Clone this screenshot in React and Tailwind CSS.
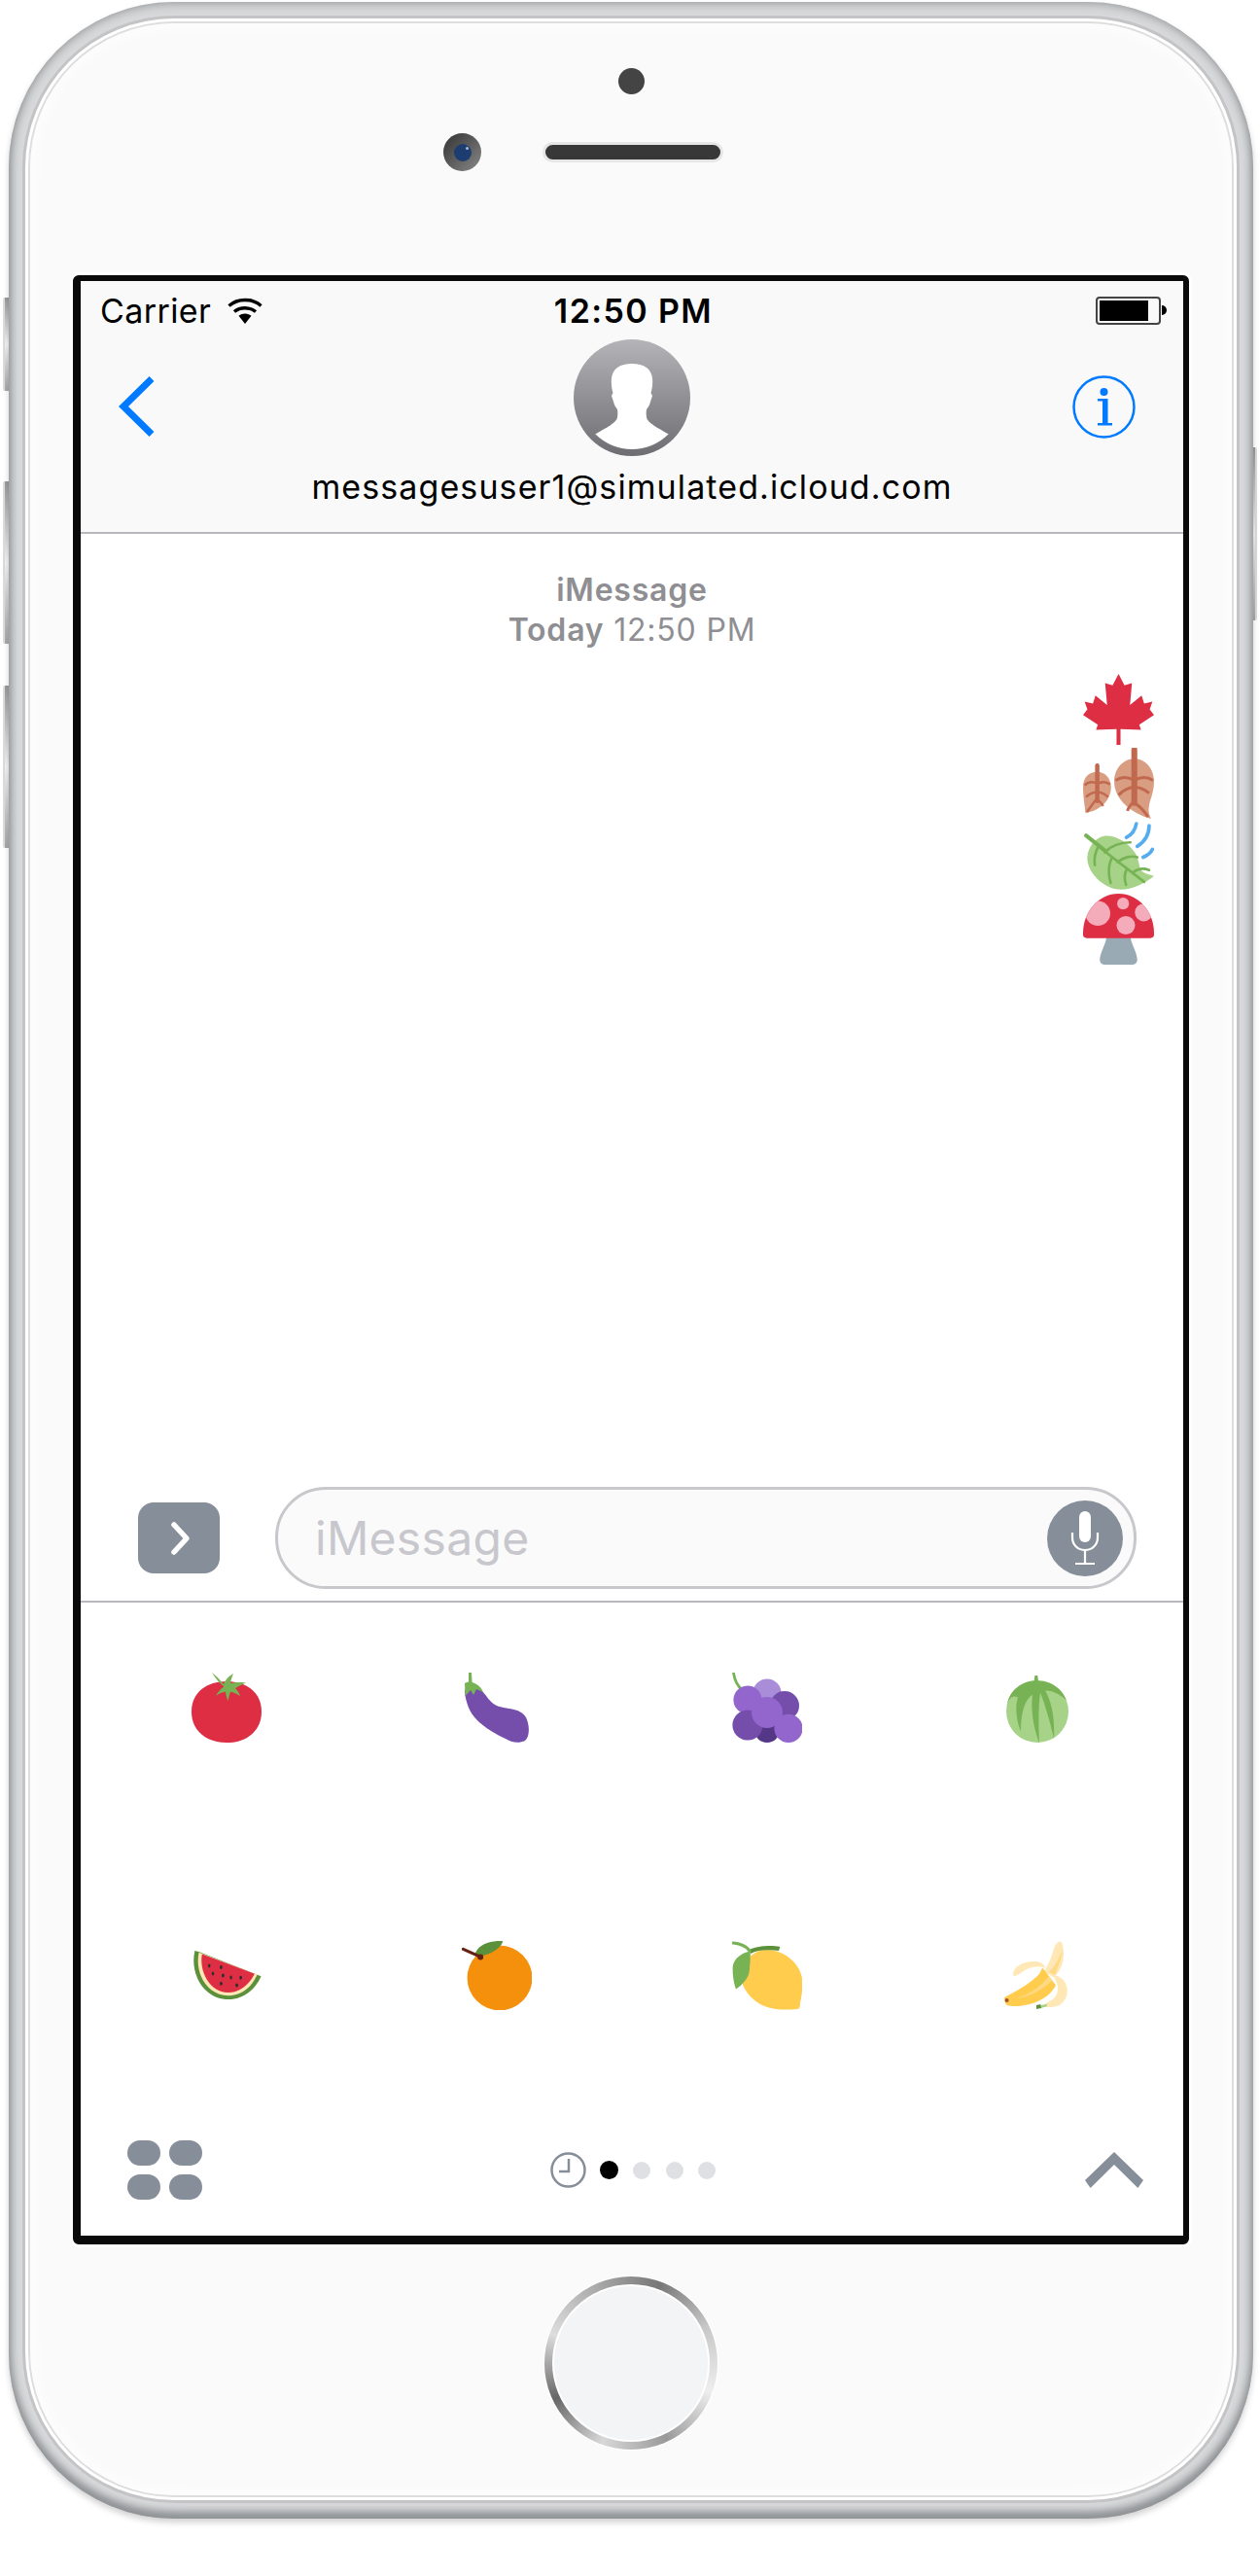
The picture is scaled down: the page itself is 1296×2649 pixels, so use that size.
import React from 'react';

const FONT = 'font-["Inter","Liberation_Sans",sans-serif]';

function Maple() {
  return (
    <svg viewBox="0 0 36 36" className="w-[73px] h-[73px]">
      <path fill="#DD2E44" d="M18 0l3 5.800 3.800-1.100-1 11.100 5.900-4.800 1.300 4 4.200-1-1.400 4 2.200 2.800-7.500 5 .9 2.500-10.400-.3V36h-2v-8l-10.400.3.900-2.500-7.500-5 2.200-2.800-1.400-4 4.200 1 1.300-4 5.900 4.800-1-11.100L15 5.800z" />
    </svg>
  );
}

function FallenLeaves() {
  return (
    <svg viewBox="0 0 36 36" className="w-[73px] h-[73px]">
      <path fill="#D99E82" d="M26 5.500C20 5.500 15.800 11 15.800 17c0 9 8.200 16 18.700 19-1.500-3-1.500-5-.5-9 1-3 2-6 2-10 0-6-4-11.500-10-11.500z" />
      <path fill="none" stroke="#C1694F" strokeWidth="1.500" d="M16.500 16.500c3-2 6-2 9.500 0c3.500-2 6.500-2 9.500 0M18 24c3-3 5-4 8-4c3 0 5 1 7.500 3M26 28c2 1 5 4 7 7M26 27c-1 1-3 3-3.500 5" />
      <path fill="none" stroke="#C1694F" strokeWidth="3" strokeLinecap="round" d="M26 1v27" />
      <path fill="#D99E82" d="M7.200 12.200C3 12.200 0 15 0 20c0 5 1 10 1.200 13 7-1 13-6 13-13 0-4.500-3-7.800-7-7.800z" />
      <path fill="none" stroke="#C1694F" strokeWidth="1.200" d="M.8 19c2-2 4-2 6.400-.8c2.500-1.200 4.500-1.200 6.500.4M1.500 25c2-2 4-2.500 5.700-2.500c2 0 4 1 5.500 2.500M7 26c-2 2-3 4-5 6.500M7.200 26c1 1 2 2 3 3.500" />
      <path fill="none" stroke="#C1694F" strokeWidth="2.200" strokeLinecap="round" d="M7.200 9v18" />
    </svg>
  );
}

function WindLeaf() {
  return (
    <svg viewBox="0 0 36 35" className="w-[73px] h-[71px]">
      <path fill="#A6D388" d="M12.500 7.200C7 7 3 12 2.200 17.500 1.500 24 8 32 16 34c6 1.500 14-1.500 20-6.500-3-1-5-1-7-3.500-1-5-2-8-3.200-9-3-4-8-7.500-13.300-7.800z" />
      <path fill="none" stroke="#77B255" strokeWidth="2" strokeLinecap="round" d="M1.500 7l10 8" />
      <path fill="none" stroke="#77B255" strokeWidth="1.300" strokeLinecap="round" d="M11 15l20 15.500M7.500 13c-1.500 3-2 6-1.500 9M11 15.500c3-3 7-5 13-5M14.500 18.500c-1.500 3-2 8-.5 12.500M17.500 20.500c3-2.500 7-3.500 10-2.500M22 24.500c-1 2-1 5-.2 7.500M25 26c3-2.500 6-2.500 8.500-1.500" />
      <path fill="none" stroke="#55ACEE" strokeWidth="1.800" strokeLinecap="round" d="M22 8c3-1.500 4.500-4 5-7M27.500 12.500c4-2.500 6-6 6-10.500M30.500 18c2-.8 3.700-2 4.700-4" />
    </svg>
  );
}

function Mushroom() {
  return (
    <svg viewBox="0 0 36 36" className="w-[73px] h-[73px]">
      <path fill="#99AAB5" d="M12 21h12c0 4 3.500 9 3.500 12.500 0 1.500-1 2.500-3 2.500h-13c-2 0-3-1-3-2.500C8.500 30 12 25 12 21z" />
      <path fill="#DD2E44" d="M18 0C8 0 0 9 0 20v1c0 .9.800 1.500 1.800 1.500h32.400c1 0 1.800-.6 1.800-1.500v-1C36 9 28 0 18 0z" />
      <clipPath id="capClip">
        <path d="M18 0C8 0 0 9 0 20v1h36v-1C36 9 28 0 18 0z" />
      </clipPath>
      <g clipPath="url(#capClip)" fill="#F4ABBA">
        <circle cx="7.500" cy="10" r="6.300" />
        <circle cx="20.300" cy="5" r="3" />
        <circle cx="30.800" cy="9.500" r="4.500" />
        <circle cx="21.700" cy="16" r="4.700" />
      </g>
    </svg>
  );
}

function Tomato() {
  return (
    <svg viewBox="0 0 36 36" className="w-[72px] h-[72px]">
      <path fill="#DD2E44" d="M18 4.500C8 4.500 0 10 0 20c0 9.500 7 16 18 16s18-6.500 18-16c0-10-8-15.500-18-15.500z" />
      <path fill="#77B255" d="M10.500 0c2 1.500 4 3.500 6 6 .8-1.800 2.200-4 5-5.500-.7 1.700-1.300 3.500-1.500 5 2.500-.5 5-.6 8-.2-2 .8-4 1.800-5.500 2.800 1 .8 2 2.200 2.500 4-1.800-1.200-3.500-2-5-2.200-.5 1.600-.9 3-1.300 4.700-.6-1.500-1-3-1.200-4.700-1.500.2-3.300.9-5 2.100 1-2 2.400-3.700 4.200-4.800C13.500 4.500 12 2.500 10.500 0z" />
    </svg>
  );
}

function Eggplant() {
  return (
    <svg viewBox="0 0 36 36" className="w-[72px] h-[72px]">
      <path fill="#744EAA" d="M2 8c3-2 6-1 8 1 3 3 4 6 8 8 5 2 12 1 15 6 2 4 2 10-.5 12-3 1.500-7 1-10-1C12 29 6 24 3.500 18 2 14 1 10 2 8z" />
      <path fill="#77B255" d="M3.500 0h1.500l.3 5c3 1 4.700 2.500 5.700 5L7.500 8.500 6 11.500 4.500 9 1.800 12 1.500 5.500c.5-.5 1.500-.7 2-.8z" />
    </svg>
  );
}

function Grapes() {
  return (
    <svg viewBox="0 0 36 36" className="w-[72px] h-[72px]">
      <path fill="none" stroke="#77B255" strokeWidth="1.400" strokeLinecap="round" d="M.8.500c.5 3 1.500 6 4.500 8.500" />
      <circle fill="#AA8DD8" cx="18" cy="10.500" r="7.300" />
      <circle fill="#9266CC" cx="8" cy="14" r="7.300" />
      <circle fill="#744EAA" cx="27" cy="17" r="7.500" />
      <circle fill="#553788" cx="18" cy="29.500" r="6.500" />
      <circle fill="#744EAA" cx="8" cy="27" r="7.800" />
      <circle fill="#9266CC" cx="18" cy="20.500" r="8" />
      <circle fill="#9266CC" cx="29" cy="28.700" r="7.300" />
    </svg>
  );
}

function Melon() {
  return (
    <svg viewBox="0 0 36 36" className="w-[72px] h-[72px]">
      <circle fill="#A6D388" cx="18" cy="20" r="16" />
      <path fill="#77B255" d="M16.700 1.500h1.400l.4 2.800c7 .2 12 4 14.500 10-4-3.500-7-5-11-5 3.500 6 5 14 4.500 24.500-2-8-4-16-7-23.500-1 7-1 15-.5 26-3-8-4.500-17-3.500-25-4 3-6 9-6 19-2.500-6-3-13-1.500-17.500C5 11 3 14 2.400 17 3 10.500 8.500 4.700 16.300 4.200z" />
    </svg>
  );
}

function Watermelon() {
  return (
    <svg viewBox="0 0 36 36" className="w-[72px] h-[72px]">
      <path fill="#5C913B" d="M1.700 5.500l2.300.6L33.500 17.700l2.300.9C33 25 27 30.500 19 30.500 6 30.500-1 17 1.700 5.500z" />
      <path fill="#FFE8B6" d="M3.800 6.400l30 11.300C31 24 26 28.600 19 28.600 8 28.600 1.500 17 3.800 6.400z" />
      <path fill="#DD2E44" d="M5.400 7.200l27 10.200C29.500 23 25 27 19 27 9.500 27 3.800 16.500 5.400 7.200z" />
      <g fill="#292F33">
        <ellipse cx="9.100" cy="13.200" rx=".6" ry="1" />
        <ellipse cx="15.200" cy="14" rx=".7" ry="1" />
        <ellipse cx="11" cy="17.200" rx=".6" ry="1" />
        <ellipse cx="16.200" cy="18.200" rx=".7" ry="1" />
        <ellipse cx="20.300" cy="19.200" rx=".6" ry="1" />
        <ellipse cx="25.300" cy="19.400" rx=".7" ry="1" />
        <ellipse cx="15.200" cy="22.400" rx=".7" ry="1" />
        <ellipse cx="23.300" cy="23.300" rx=".7" ry="1" />
      </g>
    </svg>
  );
}

function Orange() {
  return (
    <svg viewBox="0 0 36 36" className="w-[72px] h-[72px]">
      <circle fill="#F4900C" cx="19.500" cy="19.500" r="16.700" />
      <path fill="#5C913B" d="M6.700 7.500C8 3 13 .2 21.200.6 20 4.500 14 8 8 8.500z" />
      <path fill="none" stroke="#662113" strokeWidth="1.600" strokeLinecap="round" d="M.7 4.700l9 4" />
      <circle fill="#662113" cx="9.600" cy="8.800" r="1.500" />
    </svg>
  );
}

function Lemon() {
  return (
    <svg viewBox="0 0 36 36" className="w-[72px] h-[72px]">
      <path fill="#FFCC4D" d="M18 5c10 .5 18.500 8 18.300 18-.2 4-.8 7-1.300 9.500 0 2-.5 3-1.500 3-4 .3-7 .5-11 0C14 34.500 8 29 5.500 23 3.500 14 9 5 18 5z" />
      <path fill="#5C913B" d="M8.800 5C13 3 20 2.500 24.700 3.500L24 5.500C19 4.800 13 5 9.500 7z" />
      <path fill="none" stroke="#77B255" strokeWidth="1.600" strokeLinecap="round" d="M.6 1.500C4 1.800 7 3 9 5.500" />
      <path fill="#77B255" d="M9.300 5.800C4 7 .5 10 .3 14.500c0 4 .5 7.500 1.700 10.700C6 22.500 9 19 9 14.500c.3-3 .5-6 .3-8.700z" />
    </svg>
  );
}

function Banana() {
  return (
    <svg viewBox="0 0 36 36" className="w-[72px] h-[72px]">
      <path fill="#FFE8B6" d="M29.500.8c-2 .4-3 3-4 7-.9 3-2.500 5.500-4 8.500l5 3c3-3 5-7 5-12 0-3-.5-6.500-2-6.500z" />
      <path fill="#FFD983" d="M31 5c-.5 4-2 8-4 13l-3-1.500c3-3 5-7 7-11.500z" />
      <path fill="#FFE8B6" d="M5.700 18.500C5 14 10 11 16.700 11c3 0 5 1.500 5.500 3.500-4-1.500-9-.5-12 2-1.500 1-3 2-4.500 2z" />
      <path fill="#FFCC4D" d="M1 29.500c6-3 13-7 17.500-11.500.8-.8 1.500-2.500 2-3.800 2 2 4.500 6 7 9C25 28 20 31.500 14 33c-4 1-9 1.500-11.500.5-1-.5-1.500-2-1.500-4z" />
      <path fill="#FFD983" d="M7 30c6-1.500 13-6 17-11.500l1.500 2.500C21 25 14 29.500 7 30z" />
      <path fill="#FFE8B6" d="M26 18c4 .5 7 3 7.400 7.500.3 3-1.500 6.500-4 8-3.500 1.500-7 1-9.500.5l6-3.500c2-1.500 3-4 2.500-6.500-.3-2-1.200-4-2.400-6z" />
      <circle fill="#A0522D" cx="2.300" cy="31" r="1" />
      <path fill="#5C913B" d="M17.500 33.500l2.200-.5.300 2-2.500.5z" />
      <path fill="#A6D388" d="M20 33.500l3-.5v1l-3 1z" />
    </svg>
  );
}

function Avatar() {
  return (
    <svg viewBox="0 0 120 120" className="w-[120px] h-[120px]">
      <defs>
        <linearGradient id="avatarGrad" x1="0" y1="0" x2="0" y2="1">
          <stop offset="0" stopColor="#b4b4b8" />
          <stop offset="1" stopColor="#6d6d72" />
        </linearGradient>
        <clipPath id="avatarClip">
          <circle cx="60" cy="60" r="53" />
        </clipPath>
      </defs>
      <circle cx="60" cy="60" r="60" fill="url(#avatarGrad)" />
      <path
        clipPath="url(#avatarClip)"
        fill="#fff"
        d="M60 25c12 0 20 5 21 15 .5 5 0 10-1.500 15l1.500 3-2 6c-.7 3-2 5.500-4 8-.5 3-.5 7 .5 10 4 6 13 10 32 21v17H12.500v-17c19-11 28-15 32-21 1-3 1-7 .5-10-2-2.500-3.300-5-4-8l-2-6 1.500-3C39 50 38.500 45 39 40c1-10 9-15 21-15z"
      />
    </svg>
  );
}

function Metal({ children }) {
  return (
    <div className="w-[1280px] h-[2588px] rounded-[170px] p-[14px] pb-[16px] bg-[#d8d9da] shadow-[0_4px_6px_rgba(0,0,0,0.18),inset_0_-7px_8px_#8f9396,inset_0_0_12px_#88898c]">
      <div className="w-full h-full rounded-[156px] p-[3px] bg-[#c4c4c6]">
        <div className="w-full h-full rounded-[153px] p-[3px] bg-white">
          <div className="w-full h-full rounded-[150px] p-[2px] bg-[#dddddd]">{children}</div>
        </div>
      </div>
    </div>
  );
}

function StatusBar() {
  return (
    <div className="grid grid-cols-[1fr_auto_1fr] items-center h-[62px] pb-[2px] pl-[20px] pr-[17px] text-[34px] text-black">
      <div className="flex items-center gap-[17px]">
        <span className="tracking-[0.4px]">Carrier</span>
        <svg viewBox="0 0 36 27" className="w-[36px] h-[27px]">
          <path fill="none" stroke="#000" strokeWidth="3.400" d="M1.500 8.500C10.500 .5 25.500 .5 34.500 8.500" />
          <path fill="none" stroke="#000" strokeWidth="3.400" d="M7 14.500c6-5 16-5 22 0" />
          <path fill="#000" d="M11.500 18.800c4-3 9-3 13 0L18 27z" />
        </svg>
      </div>
      <span className="font-semibold tracking-[1.400px]">12:50 PM</span>
      <div className="flex justify-end items-center">
        <div className="w-[67px] h-[29px] rounded-[4px] border-2 border-[#444] p-[2px] bg-[#f9f9f9]">
          <div className="w-[50px] h-full bg-black" />
        </div>
        <div className="w-[5px] h-[10px] ml-[1px] rounded-r-full bg-black" />
      </div>
    </div>
  );
}

function NavBar() {
  return (
    <div className="grid grid-cols-[1fr_auto_1fr] -mt-[2px] px-[38px]">
      <div className="pt-[38px]">
        <svg viewBox="0 0 38 62" className="w-[38px] h-[62px]">
          <path fill="none" stroke="#007aff" strokeWidth="7" d="M35 2.500L6 31l29 28.500" />
        </svg>
      </div>
      <div className="flex flex-col items-center">
        <Avatar />
        <span className="text-[34px] tracking-[1.100px] text-black leading-[40px] mt-[12px] whitespace-nowrap">messagesuser1@simulated.icloud.com</span>
      </div>
      <div className="flex justify-end pt-[37px] pr-[11px]">
        <svg viewBox="0 0 65 65" className="w-[65px] h-[65px]">
          <circle cx="32.500" cy="32.500" r="31" fill="none" stroke="#007aff" strokeWidth="2.500" />
          <circle cx="32.500" cy="17" r="4" fill="#007aff" />
          <path fill="#007aff" d="M26 24h10.500v25H41v2.500H26V49h5V26.500h-5z" />
        </svg>
      </div>
    </div>
  );
}

function Conversation() {
  return (
    <div className="flex flex-col flex-1">
      <div className="pt-[37px] flex flex-col items-center text-[32px] tracking-[0.8px] leading-[41px] text-[#8e8e93]">
        <span className="font-semibold">iMessage</span>
        <span>
          <span className="font-semibold">Today</span> 12:50 PM
        </span>
      </div>
      <div className="mt-[25px] pr-[30px] flex flex-col items-end gap-[3px]">
        <Maple />
        <FallenLeaves />
        <WindLeaf />
        <Mushroom />
      </div>
    </div>
  );
}

function InputBar() {
  return (
    <div className="flex items-center gap-[57px] pl-[59px] pb-[12px] border-b-2 border-[#b8b8bc]">
      <div className="w-[84px] h-[73px] rounded-[16px] bg-[#868e99] flex items-center justify-center">
        <svg viewBox="0 0 24 38" className="w-[24px] h-[38px] ml-[3px]">
          <path fill="none" stroke="#fff" strokeWidth="5.500" strokeLinecap="round" strokeLinejoin="round" d="M5 5l13 14L5 33" />
        </svg>
      </div>
      <div className="w-[886px] h-[105px] rounded-[52px] border-[3px] border-[#c8c8cc] bg-[#fafafa] flex items-center justify-between pl-[38px] pr-[11px]">
        <span className="text-[48px] tracking-[0.3px] text-[#c7c7cd]">iMessage</span>
        <div className="w-[78px] h-[78px] rounded-full bg-[#868e99] flex items-center justify-center">
          <svg viewBox="0 0 34 56" className="w-[34px] h-[56px]">
            <rect x="11" y="0" width="12" height="32" rx="6" fill="#fff" />
            <path fill="none" stroke="#fff" strokeWidth="2.200" d="M4 22v5c0 8 6 13 13 13s13-5 13-13v-5M17 40v13M7 54h20" />
          </svg>
        </div>
      </div>
    </div>
  );
}

function BottomBar() {
  return (
    <div className="grid grid-cols-[1fr_auto_1fr] items-center pl-[48px] pr-[46px] mt-[134px] pb-[37px]">
      <div className="grid grid-cols-[34px_34px] gap-x-[9px] gap-y-[9px] justify-start">
        <div className="h-[26px] rounded-full bg-[#868e99]" />
        <div className="h-[26px] rounded-full bg-[#868e99]" />
        <div className="h-[26px] rounded-full bg-[#868e99]" />
        <div className="h-[26px] rounded-full bg-[#868e99]" />
      </div>
      <div className="flex items-center">
        <svg viewBox="0 0 37 37" className="w-[37px] h-[37px]">
          <circle cx="18.500" cy="18.500" r="17" fill="none" stroke="#868e99" strokeWidth="2.500" />
          <path fill="none" stroke="#868e99" strokeWidth="2.500" d="M19 7v13h-10" />
        </svg>
        <div className="w-[19px] h-[19px] rounded-full bg-black ml-[14px]" />
        <div className="w-[18px] h-[18px] rounded-full bg-[#dfe0e3] ml-[15px]" />
        <div className="w-[18px] h-[18px] rounded-full bg-[#dfe0e3] ml-[16px]" />
        <div className="w-[18px] h-[18px] rounded-full bg-[#dfe0e3] ml-[15px]" />
      </div>
      <div className="flex justify-end -mr-[5px]">
        <svg viewBox="0 0 60 37" className="w-[60px] h-[37px]">
          <path fill="#868e99" d="M30 0l30 29-5.600 8L30 13 5.600 37 0 29z" />
        </svg>
      </div>
    </div>
  );
}

export default function App() {
  return (
    <div className={`relative w-[1296px] h-[2649px] overflow-hidden bg-white pt-[2px] pl-[9px] ${FONT}`}>
      {/* side buttons */}
      <div className="absolute left-[3px] top-[306px] w-[9px] h-[96px] rounded-l-[2px] border-l-2 border-[#dcdcdc] bg-gradient-to-b from-[#9a9a9a] via-[#f4f4f4] to-[#a8a8a8]" />
      <div className="absolute left-[3px] top-[495px] w-[9px] h-[167px] rounded-l-[2px] border-l-2 border-[#dcdcdc] bg-gradient-to-b from-[#9a9a9a] via-[#f4f4f4] to-[#a8a8a8]" />
      <div className="absolute left-[3px] top-[705px] w-[9px] h-[167px] rounded-l-[2px] border-l-2 border-[#dcdcdc] bg-gradient-to-b from-[#9a9a9a] via-[#f4f4f4] to-[#a8a8a8]" />
      <div className="absolute left-[1285px] top-[460px] w-[8px] h-[178px] rounded-r-[2px] border-r-2 border-[#dcdcdc] bg-gradient-to-b from-[#9a9a9a] via-[#f4f4f4] to-[#a8a8a8]" />

      <div className="relative">
        <Metal>
          <div className="w-full h-full rounded-[148px] bg-[#fafafa] shadow-[inset_0_0_22px_#fff] flex flex-col items-center pt-[46px]">
            {/* earpiece */}
            <div className="w-[27px] h-[27px] rounded-full bg-[#444]" />
            <div className="self-start ml-[425px] mt-[40px] flex items-center gap-[63px]">
              <div className="w-[39px] h-[39px] rounded-full bg-gradient-to-br from-[#333] to-[#8a8a8a] flex items-center justify-center">
                <div className="w-[18px] h-[18px] rounded-full bg-[#1d3c70] flex items-start justify-end p-[3px]">
                  <div className="w-[3px] h-[3px] rounded-full bg-[#a8bcd8]" />
                </div>
              </div>
              <div className="w-[186px] h-[21px] rounded-full border-[3px] border-[#e6e6e6] bg-[#383838]" />
            </div>

            {/* screen */}
            <div className="mt-[107px] w-[1148px] h-[2025px] flex flex-col rounded-[6px] border-t-[6px] border-l-[8px] border-r-[6px] border-b-[9px] border-[#0a0a0a] bg-white shadow-[0_0_0_3px_#fff]">
              <div className="h-[260px] shrink-0 bg-[#f9f9f9] border-b-2 border-[#b8b8bc]">
                <StatusBar />
                <NavBar />
              </div>
              <Conversation />
              <InputBar />
              <div className="pt-[72px]">
                <div className="grid grid-cols-4 gap-y-[203px] px-[11px] justify-items-center">
                  <Tomato />
                  <Eggplant />
                  <Grapes />
                  <Melon />
                  <Watermelon />
                  <Orange />
                  <Lemon />
                  <Banana />
                </div>
              </div>
              <BottomBar />
            </div>

            {/* home button */}
            <div className="mt-[33px] w-[178px] h-[178px] rounded-full p-[10px] bg-[conic-gradient(from_20deg,#777,#c8c8c8,#eee,#999,#d8d8d8,#666,#ddd,#aaa,#777)] shadow-[0_0_0_1px_#fff]">
              <div className="w-full h-full rounded-full bg-[#f3f4f6] shadow-[0_0_0_2px_#fff]" />
            </div>
          </div>
        </Metal>
      </div>
    </div>
  );
}
